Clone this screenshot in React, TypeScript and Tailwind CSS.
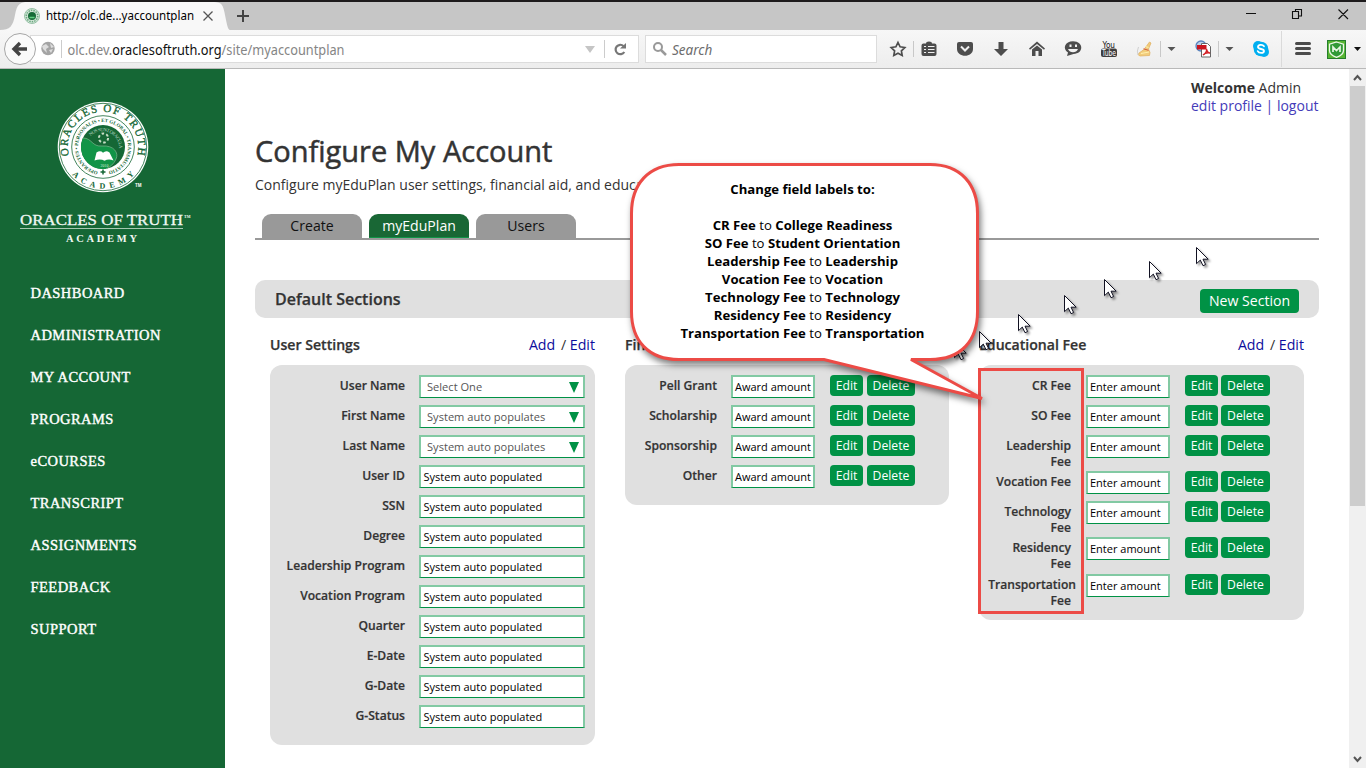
import React from "react";

const Btn = ({ children, className }: { children: React.ReactNode; className: string }) => (
  <button className={"h-[21px] shrink-0 rounded-[4px] bg-[#009245] text-center text-[12.2px] leading-[21px] text-white " + className}>{children}</button>
);

const Field = ({ text }: { text: string }) => (
  <div className="h-[23px] w-[84px] shrink-0 overflow-hidden whitespace-nowrap border-2 border-b border-[#82c9a3] border-b-[#009245] bg-white pl-[2px] text-[11px] leading-[19px] text-black">{text}</div>
);

const Head = ({ title }: { title: string }) => (
  <div className="flex h-[40px] items-start justify-between pt-[1px]">
    <h3 className="text-[14.1px] font-semibold leading-[20px] text-[#333] [-webkit-text-stroke:.25px_#333]">{title}</h3>
    <div className="whitespace-pre text-[14.2px] leading-[20px] text-[#0d0d9c]">Add <span className="pl-[2px] text-[#333]">/</span> Edit</div>
  </div>
);

const userRows = ["User Name", "First Name", "Last Name", "User ID", "SSN", "Degree", "Leadership Program", "Vocation Program", "Quarter", "E-Date", "G-Date", "G-Status"];
const aidRows = ["Pell Grant", "Scholarship", "Sponsorship", "Other"];
const feeRows: [string, string, string][] = [
  ["CR Fee", "", "h-[30px]"],
  ["SO Fee", "", "h-[30px]"],
  ["Leadership", "Fee", "h-[36px]"],
  ["Vocation Fee", "", "h-[30px]"],
  ["Technology", "Fee", "h-[36px]"],
  ["Residency", "Fee", "h-[37px]"],
  ["Transportation", "Fee", "h-[36px]"],
];
const changes: [string, string][] = [
  ["CR Fee", "College Readiness"],
  ["SO Fee", "Student Orientation"],
  ["Leadership Fee", "Leadership"],
  ["Vocation Fee", "Vocation"],
  ["Technology Fee", "Technology"],
  ["Residency Fee", "Residency"],
  ["Transportation Fee", "Transportation"],
];
const nav = ["DASHBOARD", "ADMINISTRATION", "MY ACCOUNT", "PROGRAMS", "eCOURSES", "TRANSCRIPT", "ASSIGNMENTS", "FEEDBACK", "SUPPORT"];

const Cursor = ({ className }: { className: string }) => (
  <svg className={"absolute overflow-visible drop-shadow-[2px_2px_1px_rgba(0,0,0,0.4)] " + className} width="14" height="20" viewBox="0 0 14 20">
    <path d="M.5.5v16.2l3.8-3.6 2.7 5.6 2.6-1.2-2.6-5.3h5.2z" fill="#fff" stroke="#111122" />
  </svg>
);

const Seal = () => (
  <svg width="94" height="94" viewBox="0 0 94 94" fontFamily="Liberation Serif, serif">
    <defs>
      <path id="outer" d="M13.400 57.500A35.200 35.200 0 1 1 80.600 57.500" />
      <path id="lower" d="M7.500 60A41.600 41.600 0 0 0 86.500 60" />
      <path id="mid" d="M43 71.700A25 25 0 1 1 50.900 71.700" />
      <path id="inner" d="M34.500 36A16.800 16.800 0 0 1 62 54" />
    </defs>
    <circle cx="47" cy="47" r="45.3" fill="#fff" />
    <circle cx="47" cy="47" r="43.7" fill="none" stroke="#156735" strokeWidth=".8" />
    <circle cx="47" cy="47" r="31.3" fill="none" stroke="#156735" strokeWidth=".8" />
    <circle cx="47" cy="47" r="22" fill="#156735" />
    <path d="M27 38C36 38 36 47 46 46C58 45 63 53 60 59C58 64 54 67 50 68.800A22 22 0 0 1 27 38z" fill="#119447" />
    <path d="M27 38C36 38 36 47 46 46C58 45 63 53 60 59C58 64 54 67 50 68.800" fill="none" stroke="#7db58e" strokeWidth=".7" />
    <g fill="#156735">
      <text fontSize="11" stroke="#156735" strokeWidth=".35"><textPath href="#outer" textLength="127" startOffset="2">ORACLES OF TRUTH</textPath></text>
      <text fontSize="8" fontWeight="700"><textPath href="#lower" textLength="70" startOffset="17">ACADEMY</textPath></text>
      <text fontSize="5" fontWeight="700"><textPath href="#mid" textLength="146" startOffset="1">OPERANTES • PERSONALIS • ET GLOBAL • TRANSMUTATIO</textPath></text>
    </g>
    <path d="M47 69.500v5M44.500 72h5" stroke="#156735" strokeWidth="1.500" />
    <text fontSize="4.8" fill="#b9d8c3"><textPath href="#inner" textLength="40">NOS SUNT ORACULA</textPath></text>
    <circle cx="47.500" cy="38" r="4.600" fill="none" stroke="#c6ddc5" strokeWidth="2" strokeDasharray="2.600 2.200" />
    <path d="M38.500 60.500l2-8q4-2.500 6.500.3q3-3 6.500-.3l4 8q-5-2-9 .3q-4-2.200-10-.3z" fill="#fff" />
    <text x="48.500" y="66.500" fontSize="4" textAnchor="middle" fill="#d5eddc">2010</text>
    <text x="79" y="87" fontSize="4.500" fontFamily="Liberation Sans, sans-serif" fontWeight="700" fill="#fff">TM</text>
  </svg>
);

const ToolIcons = () => (
  <svg className="shrink-0" width="489" height="38" viewBox="877 30 489 38">
    <g fill="#4d4d4d">
      <path d="M898 42.500l2.100 4.300 4.700.7-3.400 3.300.8 4.700-4.200-2.200-4.200 2.200.8-4.700-3.400-3.300 4.700-.7z" fill="none" stroke="#4d4d4d" strokeWidth="1.700" />
      <path d="M923.500 43.500h2.500q0-2 3-2t3 2h2.500q2 0 2 2V54q0 2-2 2h-11q-2 0-2-2v-8.500q0-2 2-2z" />
      <path d="M924 46.500h2M928 46.500h6.500M924 49.500h2M928 49.500h6.500M924 52.500h2M928 52.500h6.500" stroke="#f0f0f0" strokeWidth="1.200" />
      <path d="M959 42h12q2 0 2 2v5c0 9-16 9-16 0v-5q0-2 2-2z" />
      <path d="M961 46.500l4 4 4-4" fill="none" stroke="#f0f0f0" strokeWidth="2" />
      <path d="M998.500 42h5v7h4.500l-7 7-7-7h4.500z" />
      <path d="M1037 41.500l8 7-1 1.300-7-5.800-7 5.800-1-1.300z" /><path d="M1037 45.500l5 4V56h-3.500v-5h-3v5H1032v-6.500z" />
      <path d="M1073 41.200c11 0 11 12.500.5 12.700L1067 56l1-3.500c-6-4-3-11.300 5-11.300z" />
    </g>
    <path d="M1069.500 44.500h2v2.500h-2zM1075 44.500h2v2.500h-2zM1068 49h10q-1.500 3.300-5 3.300t-5-3.300z" fill="#f3f3f3" />
    <path d="M913.500 41v16M1160.500 41v16M1218.500 41v16" stroke="#c8c8c8" />
    <g fontFamily="DejaVu Sans Condensed, sans-serif">
      <text x="1102.500" y="47.500" fontSize="8" textLength="12.500" lengthAdjust="spacingAndGlyphs" fill="#111">You</text>
      <rect x="1101" y="48.500" width="16" height="8.500" rx="2" fill="#3e3e3e" />
      <text x="1102" y="56" fontSize="8" textLength="14" lengthAdjust="spacingAndGlyphs" fill="#fff">Tube</text>
    </g>
    <path d="M1149.500 42l1.500 1-2.500 6 1.500 3.500-.5 3-9.500.5q-3-1-1-3l5-3.500z" fill="#f2cd7b" stroke="#dfae5c" strokeWidth=".7" />
    <path d="M1141 53.500l8-1.500M1145.500 46.500l3 1" stroke="#fff0b0" /><path d="M1143.500 48.800l5 1.500" stroke="#d4583f" /><path d="M1138.500 47q-2 4-.5 8" fill="none" stroke="#d0d0d0" />
    <path d="M1167.500 47h8l-4 4zM1225.500 47h8l-4 4z" fill="#555" />
    <circle cx="1201" cy="46" r="5" fill="#b9d0ea" stroke="#5983bd" strokeWidth="1.300" />
    <path d="M1201.500 43.500h6l3 3V57h-9z" fill="#fff" stroke="#666" /><path d="M1197 45h9.500v4.500h-9.500z" fill="#c9151e" />
    <path d="M1203 55q4-2 3.500-6 1 4 3.500 4-4-1-7 2z" fill="none" stroke="#d32127" strokeWidth="1.300" />
    <circle cx="1258" cy="46" r="5" fill="#00aff0" /><circle cx="1264" cy="52" r="5" fill="#00aff0" /><circle cx="1261" cy="49" r="7.300" fill="#00aff0" />
    <path d="M1264 46.300c-1.600-2.200-6-1.600-6 .7 0 2.700 6 1.300 6 4 0 2.500-5 2.700-6.300.1" fill="none" stroke="#fff" strokeWidth="1.800" strokeLinecap="round" />
    <path d="M1281.500 31v36" stroke="#dadada" />
    <path d="M1296.500 43.500h13M1296.500 48.500h13M1296.500 53.500h13" stroke="#4b4b4b" strokeWidth="3" strokeLinecap="round" />
    <rect x="1327.500" y="40.500" width="18" height="18" fill="#56b531" stroke="#257e2c" />
    <path d="M1336.500 42l7 2.200v6.300c0 3.300-3.500 5.500-7 6.900-3.500-1.400-7-3.600-7-6.900v-6.300z" fill="#319a37" stroke="#eef8ea" strokeWidth="1.300" />
    <path d="M1333 52v-5l3.500 3.500 3.500-3.500v5" fill="none" stroke="#e6f5e2" strokeWidth="1.700" />
    <path d="M1354 47h7l-3.500 4z" fill="#111" />
  </svg>
);

const Browser = () => (
  <header className="h-[69px] shrink-0 font-['Noto_Sans',sans-serif]">
    <div className="h-[2px] bg-[#1d1b1c]" />
    <div className="flex h-[28px] justify-between bg-[#c6c6c6]">
      <div className="flex">
        <svg width="230" height="28" viewBox="0 0 230 28"><path d="M0 28C10 28 13 24 15 13S20 0 28 0h186c8 0 9 3 11 13s3 15 5 15z" fill="#f8f8f8" />
          <circle cx="32" cy="14" r="7.500" fill="#d5e6da" stroke="#81b594" strokeWidth=".8" /><circle cx="32" cy="14" r="5.700" fill="none" stroke="#6aaa80" strokeWidth="1.500" strokeDasharray="1.500 1" /><circle cx="32" cy="14" r="4" fill="#176b38" /><path d="M29.500 15.500h5" stroke="#5fd080" strokeWidth="1.500" />
          <text x="46" y="18" fontSize="12" textLength="148" lengthAdjust="spacingAndGlyphs" fill="#000">http://olc.de...yaccountplan</text>
          <path d="M203.500 9.500l9 9m0-9l-9 9" stroke="#555" strokeWidth="1.300" />
        </svg>
        <svg width="26" height="28"><path d="M7 14h12M13 8v12" stroke="#444" strokeWidth="2" /></svg>
      </div>
      <svg width="130" height="28"><path d="M10 11.500h10M102.500 7.500l9.500 9.500m0-9.500l-9.500 9.500M56.500 9.500h6v7h-6zM59.500 9.500v-2h6v6.500h-3" fill="none" stroke="#111" strokeWidth="1.100" /></svg>
    </div>
    <div className="flex h-[39px] items-start border-b border-[#b9b9b9] bg-gradient-to-b from-[#f7f7f7] to-[#ededed]">
      <svg className="relative z-10 shrink-0" width="36" height="38"><circle cx="20" cy="19" r="15.500" fill="#fafafa" stroke="#a6a6a6" /><path d="M20 13l-6 6 6 6M14.500 19H27" fill="none" stroke="#444" strokeWidth="3.400" /></svg>
      <div className="-ml-[6px] mt-[5px] flex h-[28px] w-[609px] items-center overflow-hidden border border-[#dcdcdc] bg-white pl-[9px]">
        <svg className="shrink-0" width="16" height="16"><circle cx="8" cy="7.500" r="6.700" fill="#a4a4a4" /><path d="M2 5l4-2 3 3-3 2 1 4-4-4zM10 2l4 4-3 1zM9 9l4-1-2 4z" fill="#ddd" /></svg>
        <span className="ml-[5px] h-[18px] shrink-0 border-l border-[#ccc]" />
        <svg className="shrink-0" width="518" height="26"><text x="5.500" y="19" fontSize="13.500" textLength="277" lengthAdjust="spacingAndGlyphs" fill="#858585">olc.dev.<tspan fill="#111">oraclesoftruth.org</tspan>/site/myaccountplan</text></svg>
        <svg className="shrink-0" width="57" height="26"><path d="M5 10h10l-5 7z" fill="#c5c5c5" /><path d="M24.500 4v18" stroke="#ccc" /><path d="M43.500 10a4.700 4.700 0 1 0 .8 6" fill="none" stroke="#777" strokeWidth="2.200" /><path d="M40 12.500h6V7z" fill="#777" /></svg>
      </div>
      <div className="ml-[6px] mt-[5px] flex h-[28px] w-[232px] items-center border border-[#dcdcdc] bg-white pl-[7px] text-[13.5px] italic text-[#6d6d6d]">
        <svg width="14" height="14" className="mr-[5px]"><circle cx="5" cy="5" r="4" fill="none" stroke="#999" strokeWidth="2" /><path d="M8 8l5 5" stroke="#999" strokeWidth="2.500" /></svg><span className="pt-[2px]">Search</span>
      </div>
      <ToolIcons />
    </div>
  </header>
);

const labelText = "text-[12.1px] font-semibold text-[#333] [-webkit-text-stroke:.2px_#333]";

export default function App() {
  return (
    <div className="relative flex h-[768px] w-[1366px] flex-col overflow-hidden bg-white font-['Open_Sans','Noto_Sans',sans-serif] text-[#333]">
      <Browser />
      <div className="flex min-h-0 flex-1">
        <aside className="flex w-[225px] shrink-0 flex-col bg-[#156735] pt-[31px]">
          <div className="ml-[56px]"><Seal /></div>
          <svg className="mt-[12px]" width="225" height="50" fontFamily="Liberation Serif, serif" fill="#f1f8f3">
            <text x="20" y="19" fontSize="15.500" textLength="163" lengthAdjust="spacingAndGlyphs" stroke="#f1f8f3" strokeWidth=".3">ORACLES OF TRUTH</text><text x="184" y="12" fontSize="4" fontWeight="700">TM</text>
            <path d="M20 22.500h163" stroke="#a6c8b1" /><text x="66" y="36" fontSize="10.500" fontWeight="700" textLength="71">ACADEMY</text>
          </svg>
          <nav className="mt-[16px] flex flex-col pl-[30.5px] font-['Liberation_Serif',serif]">
            {nav.map((n) => <a key={n} className="h-[42px] text-[14.5px] leading-[42px] tracking-[.45px] text-white [-webkit-text-stroke:.4px_white]">{n}</a>)}
          </nav>
        </aside>
        <main className="flex min-w-0 flex-1 flex-col pl-[30px] pr-[30px]">
          <div className="ml-[936px] mt-[10px] whitespace-nowrap text-[14px] leading-[18px]">
            <div><b className="font-bold">Welcome</b> Admin</div><div className="text-[#443bb9]">edit profile | logout</div>
          </div>
          <h1 className="mt-[18px] text-[29px] font-medium leading-[36px] [-webkit-text-stroke:.5px_#333]">Configure My Account</h1>
          <p className="mt-[6px] text-[14px] leading-[20px]">Configure myEduPlan user settings, financial aid, and educational fees.</p>
          <div className="mt-[19px] flex h-[26px] gap-[7px] border-b-2 border-[#999] pl-[7px] text-center text-[14.1px] leading-[24px] text-[#111]">
            <div className="w-[100px] rounded-t-[9px] bg-[#999]">Create</div>
            <div className="w-[100px] rounded-t-[9px] border-b border-[#119447] bg-[#196735] text-white">myEduPlan</div>
            <div className="w-[100px] rounded-t-[9px] bg-[#999]">Users</div>
          </div>
          <div className="mt-[40px] flex h-[38px] items-center justify-between rounded-[10px] bg-[#e0e0e0] px-[20px]">
            <h2 className="text-[16px] font-semibold [-webkit-text-stroke:.25px_#333]">Default Sections</h2>
            <button className="mt-[4px] h-[24px] w-[99px] rounded-[4px] bg-[#009245] text-[14.1px] leading-[22px] text-white">New Section</button>
          </div>
          <div className="mt-[16px] flex items-start gap-[30px] pl-[15px]">
            <section className="w-[325px]">
              <Head title="User Settings" />
              <div className="-mt-[9px] h-[380px] rounded-[12px] bg-[#e0e0e0] pt-[10px]">
                {userRows.map((r, i) => (
                  <div key={r} className="flex h-[30px] items-start">
                    <div className={"w-[135px] whitespace-nowrap text-right leading-[22px] " + labelText}>{r}</div>
                    <div className={"ml-[14px] flex h-[23px] w-[166px] items-center justify-between border-2 border-b border-[#82c9a3] border-b-[#009245] bg-white " + (i < 3 ? "pl-[6px] pr-[4px] text-[11.1px] text-[#555]" : "pl-[2.5px] text-[11px] text-black")}>
                      <span>{i === 0 ? "Select One" : i < 3 ? "System auto populates" : "System auto populated"}</span>
                      {i < 3 && <svg width="10" height="11"><path d="M0 0h10L5 11z" fill="#009245" /></svg>}
                    </div>
                  </div>
                ))}
              </div>
            </section>
            <section className="w-[324px]">
              <Head title="Financial Aid" />
              <div className="-mt-[9px] h-[140px] rounded-[12px] bg-[#e0e0e0] pt-[10px]">
                {aidRows.map((r) => (
                  <div key={r} className="flex h-[30px] items-start">
                    <div className={"w-[92px] text-right leading-[22px] " + labelText}>{r}</div>
                    <div className="ml-[14px] mr-[15px]"><Field text="Award amount" /></div>
                    <div className="flex gap-[4px]"><Btn className="w-[33px]">Edit</Btn><Btn className="w-[48px]">Delete</Btn></div>
                  </div>
                ))}
              </div>
            </section>
            <section className="w-[325px]">
              <Head title="Educational Fee" />
              <div className="-mt-[9px] h-[255px] rounded-[12px] bg-[#e0e0e0] pt-[10px]">
                {feeRows.map(([a, b, h]) => (
                  <div key={a} className={"flex items-start " + h}>
                    <div className={"flex w-[92px] shrink-0 flex-col items-end pt-[3px] leading-[16px] " + labelText}><span className={a === "Transportation" ? "-mr-[5px]" : ""}>{a}</span><span>{b}</span></div>
                    <div className="ml-[15px] mr-[15px]"><Field text="Enter amount" /></div>
                    <div className="flex gap-[3px]"><Btn className="w-[33px]">Edit</Btn><Btn className="w-[49px]">Delete</Btn></div>
                  </div>
                ))}
              </div>
            </section>
          </div>
        </main>
        <div className="flex w-[17px] shrink-0 flex-col items-center bg-[#f0f0f0]">
          <svg width="17" height="17"><path d="M5 11l3.500-4 3.500 4" fill="none" stroke="#555" strokeWidth="2" /></svg>
          <div className="h-[420px] w-[15px] bg-[#cdcdcd]" />
          <svg className="mt-auto" width="17" height="17"><path d="M5 6l3.500 4L12 6" fill="none" stroke="#555" strokeWidth="2" /></svg>
        </div>
      </div>
      <Cursor className="left-[1196px] top-[247px]" /><Cursor className="left-[1149px] top-[261px]" /><Cursor className="left-[1104px] top-[279px]" />
      <Cursor className="left-[1064px] top-[295px]" /><Cursor className="left-[1018px] top-[314px]" /><Cursor className="left-[979px] top-[331px]" /><Cursor className="left-[954px] top-[341px]" />
      <div className="absolute left-[978px] top-[368px] h-[246px] w-[106px] border-[3px] border-[#ec4b46]" />
      <svg className="absolute left-[620px] top-[155px] overflow-visible drop-shadow-[2px_4px_3px_rgba(0,0,0,0.5)]" width="370" height="255" viewBox="620 155 370 255">
        <path d="M679 164.500h251c31 0 47.500 20 47.500 49v98c0 29-16 48-47.500 48h-19L982 398.500 824 359.500H679c-31 0-47.500-19-47.500-48v-98c0-29 16.500-49 47.500-49z" fill="#fff" stroke="#ec4b46" strokeWidth="3" />
      </svg>
      <div className="absolute left-[631.5px] top-[180px] w-[342px] text-center text-[13.15px] leading-[18px] text-black">
        <b>Change field labels to:</b>
        <div className="h-[18px]" />
        {changes.map(([a, b]) => (
          <div key={a}><b>{a}</b> to <b>{b}</b></div>
        ))}
      </div>
    </div>
  );
}
